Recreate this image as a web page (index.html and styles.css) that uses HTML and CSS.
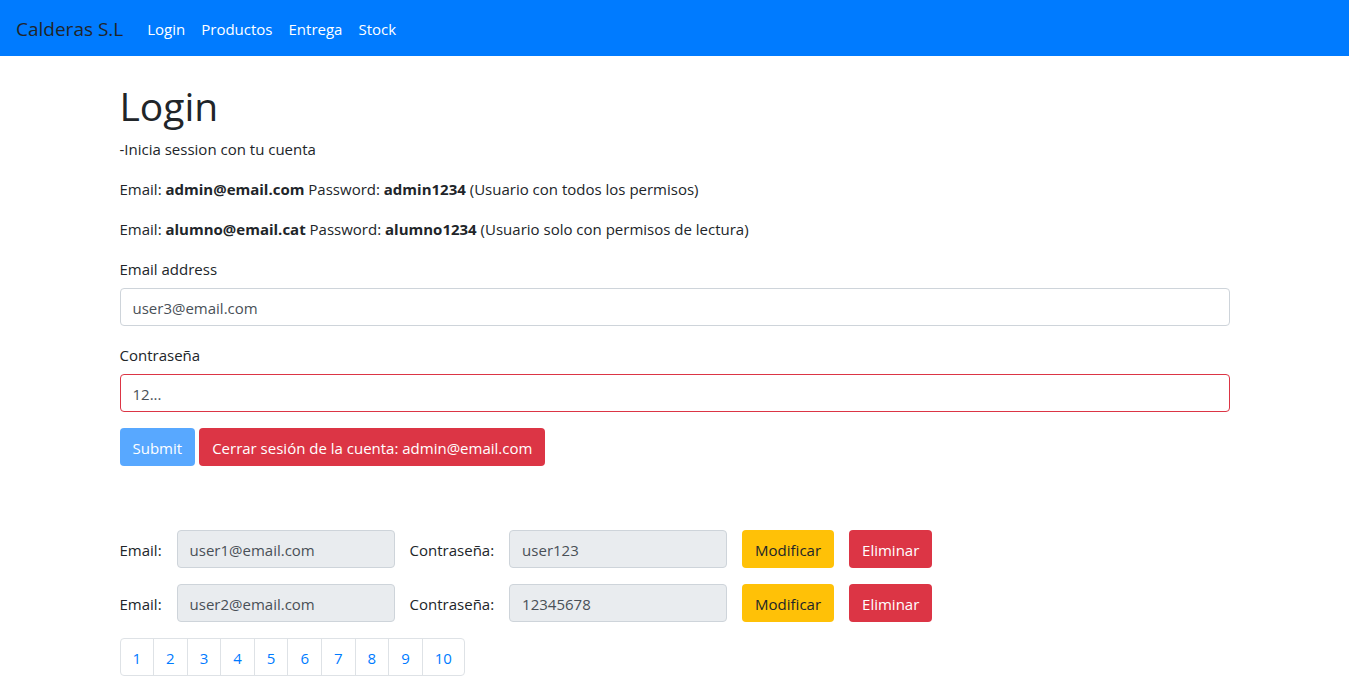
FILE: index.html
```html
<!DOCTYPE html>
<html lang="es">
<head>
<meta charset="utf-8">
<meta name="viewport" content="width=device-width, initial-scale=1">
<title>Calderas S.L</title>
<link rel="stylesheet" href="styles.css">
</head>
<body>
<nav class="navbar">
  <a class="brand" href="#">Calderas S.L</a>
  <a class="nav-link" href="#">Login</a>
  <a class="nav-link" href="#">Productos</a>
  <a class="nav-link" href="#">Entrega</a>
  <a class="nav-link" href="#">Stock</a>
</nav>
<main class="container">
  <h1>Login</h1>
  <p>-Inicia session con tu cuenta</p>
  <p>Email: <b>admin@email.com</b> Password: <b>admin1234</b> (Usuario con todos los permisos)</p>
  <p>Email: <b>alumno@email.cat</b> Password: <b>alumno1234</b> (Usuario solo con permisos de lectura)</p>
  <form>
    <div class="group">
      <label for="email">Email address</label>
      <input class="control" id="email" type="text" value="user3@email.com">
    </div>
    <div class="group">
      <label for="pass">Contraseña</label>
      <input class="control invalid" id="pass" type="text" value="12...">
    </div>
    <div class="actions">
      <button class="btn primary" type="submit" disabled>Submit</button>
      <button class="btn danger" type="button">Cerrar sesión de la cuenta: admin@email.com</button>
    </div>
  </form>
  <section class="users">
    <div class="user">
      <label for="e1">Email:</label>
      <input class="control" id="e1" type="text" value="user1@email.com" disabled>
      <label for="p1">Contraseña:</label>
      <input class="control" id="p1" type="text" value="user123" disabled>
      <button class="btn warning" type="button">Modificar</button>
      <button class="btn danger" type="button">Eliminar</button>
    </div>
    <div class="user">
      <label for="e2">Email:</label>
      <input class="control" id="e2" type="text" value="user2@email.com" disabled>
      <label for="p2">Contraseña:</label>
      <input class="control" id="p2" type="text" value="12345678" disabled>
      <button class="btn warning" type="button">Modificar</button>
      <button class="btn danger" type="button">Eliminar</button>
    </div>
  </section>
  <nav class="pages" aria-label="Páginas">
    <a href="#">1</a><a href="#">2</a><a href="#">3</a><a href="#">4</a><a href="#">5</a><a href="#">6</a><a href="#">7</a><a href="#">8</a><a href="#">9</a><a href="#">10</a>
  </nav>
</main>
</body>
</html>
```
FILE: styles.css
```css
* { box-sizing: border-box; }
body {
  margin: 0;
  font: 15px/24px "Segoe UI", "Open Sans", "Noto Sans", sans-serif;
  color: #212529;
  background: #fff;
}
a { text-decoration: none; }
.navbar {
  display: flex;
  align-items: center;
  padding: 10px 16px 8px;
  min-height: 56px;
  background: #007bff;
}
.brand { margin-right: 16px; font-size: 19px; line-height: 30px; color: #212529; }
.nav-link { padding: 0 8px; color: #fff; }
.container { max-width: 1140px; margin: 0 auto; padding: 26px 15px 16px; }
h1 { margin: 0 0 6px; font-size: 39px; line-height: 48px; font-weight: 400; }
p { margin: 0 0 15px; padding-top: 1px; }
.group { margin-bottom: 16px; }
.group label { display: block; padding-top: 1px; margin-bottom: 7px; }
.control {
  display: block;
  width: 100%;
  height: 38px;
  padding: 7px 12px 5px;
  font: inherit;
  color: #495057;
  background: #fff;
  border: 1px solid #ced4da;
  border-radius: 4px;
}
.control:disabled { background: #e9ecef; }
.control.invalid { border-color: #dc3545; }
.btn {
  height: 38px;
  padding: 7px 12px 5px;
  font: inherit;
  color: #fff;
  white-space: nowrap;
  border: 1px solid transparent;
  border-radius: 4px;
}
.primary { background: #007bff; }
.primary:disabled { opacity: 0.65; }
.danger { background: #dc3545; }
.warning { background: #ffc107; color: #212529; }
.actions { display: flex; gap: 4px; }
.users { display: grid; gap: 16px; margin: 64px 0 16px; }
.user { display: flex; align-items: center; gap: 15px; }
.user label { padding-top: 2px; }
.user .control { width: 218px; }
.pages { display: flex; }
.pages a {
  margin-left: -1px;
  padding: 7px 12px 5px;
  color: #007bff;
  border: 1px solid #dee2e6;
}
.pages a:first-child { margin-left: 0; border-radius: 4px 0 0 4px; }
.pages a:last-child { border-radius: 0 4px 4px 0; }
```
